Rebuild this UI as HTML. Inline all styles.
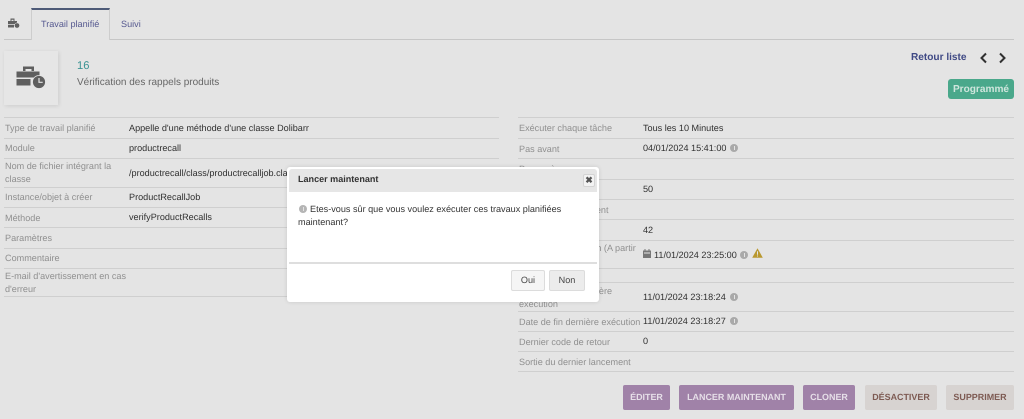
<!DOCTYPE html>
<html lang="fr"><head><meta charset="utf-8"><title>Travail planifié</title>
<style>
html,body{margin:0;padding:0}
body{width:1024px;height:419px;position:relative;overflow:hidden;background:#e4e4e4;font-family:"Liberation Sans",sans-serif;font-size:9.1px;color:#333;text-rendering:geometricPrecision}
#w{position:absolute;left:0;top:0;width:1024px;height:419px;filter:blur(.3px)}
.a{position:absolute;white-space:nowrap}
.l{position:absolute;height:1px;background:#cfcfcf}
.k{color:#8f8f8f;line-height:13px}
.v{color:#2f2f2f}
.b{position:absolute;top:385px;height:25px;line-height:24px;text-align:center;border-radius:2px;font-weight:bold;font-size:8.95px;box-sizing:border-box}
.p{background:#a082a8;color:#e6dfe8}
.g{background:#d7d3d1;color:#7d5a52}
.i{position:absolute;width:8px;height:8px;border-radius:50%;background:#a9a9a9}
.i:after{content:"";position:absolute;left:3.5px;top:2px;width:1px;height:4px;background:#e4e4e4}
</style></head><body><div id="w">
<svg class="a" style="left:7px;top:17px" width="13" height="12" viewBox="0 0 13 12"><path d="M1 4h9v3H1zM1 7.800h6V10.500H1zM3.500 4V1.500h4V4h-1V2.700h-2V4z" fill="#606060"/><circle cx="10" cy="8.500" r="2.600" fill="#606060" stroke="#e4e4e4" stroke-width=".5"/></svg>
<div class="l" style="left:4px;top:39px;width:1010px;background:#c6c6c6"></div>
<div class="a" style="left:31px;top:8px;width:79px;height:32px;border:1px solid #cdcdcd;border-top:2px solid #4d5a77;border-bottom:0;box-sizing:border-box;background:#e4e4e4"></div>
<div class="a" style="left:41px;top:19px;color:#55588f">Travail planifié</div>
<div class="a" style="left:121px;top:19px;color:#55588f">Suivi</div>

<div class="a" style="left:4px;top:51px;width:54px;height:54px;background:#e6e6e6;box-shadow:1px 1px 4px rgba(0,0,0,.1)"></div>
<svg class="a" style="left:16px;top:65px" width="30" height="25" viewBox="0 0 30 25"><path d="M0.500 6.500h23v6h-23zM0.500 14h14v6.500h-14zM7 6V1.500h11V6h-2.500V4H9.500V6z" fill="#5f5f5f"/><circle cx="23" cy="17" r="6.500" fill="#5f5f5f" stroke="#e6e6e6" stroke-width="0.800"/><path d="M23 13v4.300h3.700" fill="none" stroke="#e6e6e6" stroke-width="1.200"/></svg>
<div class="a" style="left:77px;top:60px;font-size:11.200px;color:#3c9494">16</div>
<div class="a" style="left:77px;top:77px;font-size:10px;color:#666">Vérification des rappels produits</div>

<div class="a" style="left:911px;top:52px;font-size:10.100px;font-weight:bold;color:#404a85">Retour liste</div>
<svg class="a" style="left:978px;top:52px" width="32" height="12" viewBox="0 0 32 12"><path d="M8 1.500 3.500 6 8 10.500M22 1.500 26.500 6 22 10.500" fill="none" stroke="#303030" stroke-width="2"/></svg>
<div class="a" style="left:948px;top:79px;width:66px;height:20px;background:#4aa88b;border-radius:3px;color:#cfe6dd;font-weight:bold;font-size:10.100px;line-height:21px;text-align:center">Programmé</div>

<!-- left table -->
<div class="l" style="left:4px;width:495px;top:117px"></div><div class="l" style="left:4px;width:495px;top:138px"></div><div class="l" style="left:4px;width:495px;top:158px"></div><div class="l" style="left:4px;width:495px;top:187px"></div><div class="l" style="left:4px;width:495px;top:207px"></div><div class="l" style="left:4px;width:495px;top:227px"></div><div class="l" style="left:4px;width:495px;top:248px"></div><div class="l" style="left:4px;width:495px;top:268px"></div><div class="l" style="left:4px;width:495px;top:296px"></div>
<div class="a k" style="left:5px;top:122px">Type de travail planifié</div>
<div class="a v" style="left:129px;top:123px">Appelle d'une méthode d'une classe Dolibarr</div>
<div class="a k" style="left:5px;top:142px">Module</div>
<div class="a v" style="left:129px;top:143px">productrecall</div>
<div class="a k" style="left:5px;top:160px">Nom de fichier intégrant la<br>classe</div>
<div class="a v" style="left:129px;top:168px">/productrecall/class/productrecalljob.class.php</div>
<div class="a k" style="left:5px;top:191px">Instance/objet à créer</div>
<div class="a v" style="left:129px;top:192px">ProductRecallJob</div>
<div class="a k" style="left:5px;top:212px">Méthode</div>
<div class="a v" style="left:129px;top:212px">verifyProductRecalls</div>
<div class="a k" style="left:5px;top:232px">Paramètres</div>
<div class="a k" style="left:5px;top:252px">Commentaire</div>
<div class="a k" style="left:5px;top:270px">E-mail d'avertissement en cas<br>d'erreur</div>

<!-- right table -->
<div class="l" style="left:518px;width:496px;top:117px"></div><div class="l" style="left:518px;width:496px;top:138px"></div><div class="l" style="left:518px;width:496px;top:158px"></div><div class="l" style="left:518px;width:496px;top:179px"></div><div class="l" style="left:518px;width:496px;top:199px"></div><div class="l" style="left:518px;width:496px;top:219px"></div><div class="l" style="left:518px;width:496px;top:240px"></div><div class="l" style="left:518px;width:496px;top:268px"></div><div class="l" style="left:518px;width:496px;top:282px"></div><div class="l" style="left:518px;width:496px;top:311px"></div><div class="l" style="left:518px;width:496px;top:331px"></div><div class="l" style="left:518px;width:496px;top:351px"></div><div class="l" style="left:518px;width:496px;top:371px"></div>
<div class="a k" style="left:519px;top:122px">Exécuter chaque tâche</div>
<div class="a v" style="left:643px;top:123px">Tous les 10 Minutes</div>
<div class="a k" style="left:519px;top:143px">Pas avant</div>
<div class="a v" style="left:643px;top:143px">04/01/2024 15:41:00</div><div class="i" style="left:730px;top:144px"></div>
<div class="a k" style="left:519px;top:163px">Pas après</div>
<div class="a k" style="left:519px;top:183px">Priorité</div>
<div class="a v" style="left:643px;top:184px">50</div>
<div class="a k" style="left:519px;top:204px">Nombre de lancement</div>
<div class="a k" style="left:519px;top:224px">Nombre</div>
<div class="a v" style="left:643px;top:225px">42</div>
<div class="a k" style="left:519px;top:242px">Prochaine exécution (A partir<br>de)</div>
<svg class="a" style="left:643px;top:249px" width="8" height="9" viewBox="0 0 8 9"><path d="M0 1.500h8V9H0zM1.500 0h1v2h-1zM5.500 0h1v2h-1z" fill="#777"/><path d="M1 3.500h6v1H1z" fill="#e4e4e4"/></svg>
<div class="a v" style="left:654px;top:250px">11/01/2024 23:25:00</div><div class="i" style="left:740px;top:251px"></div>
<svg class="a" style="left:752px;top:248px" width="11" height="10" viewBox="0 0 11 10"><path d="M5.500 0.300 10.800 9.700H0.200z" fill="#b9982f"/><path d="M5 3.300h1v3.400H5zM5 7.500h1v1H5z" fill="#e4e4e4"/></svg>
<div class="a k" style="left:519px;top:285px">Date de début dernière<br>exécution</div>
<div class="a v" style="left:643px;top:292px">11/01/2024 23:18:24</div><div class="i" style="left:730px;top:293px"></div>
<div class="a k" style="left:519px;top:316px">Date de fin dernière exécution</div>
<div class="a v" style="left:643px;top:316px">11/01/2024 23:18:27</div><div class="i" style="left:730px;top:317px"></div>
<div class="a k" style="left:519px;top:336px">Dernier code de retour</div>
<div class="a v" style="left:643px;top:336px">0</div>
<div class="a k" style="left:519px;top:356px">Sortie du dernier lancement</div>

<!-- action buttons -->
<div class="b p" style="left:623px;width:47px">ÉDITER</div>
<div class="b p" style="left:679px;width:115px">LANCER MAINTENANT</div>
<div class="b p" style="left:803px;width:52px">CLONER</div>
<div class="b g" style="left:865px;width:72px">DÉSACTIVER</div>
<div class="b g" style="left:946px;width:68px">SUPPRIMER</div>

<!-- dialog -->
<div class="a" style="left:287px;top:167px;width:312px;height:135px;background:#fff;border-radius:3px;box-shadow:0 0 4px rgba(0,0,0,.12)">
  <div class="a" style="left:2px;top:2px;width:308px;height:23px;background:#e6e6e6;border-radius:3px 3px 0 0"></div>
  <div class="a" style="left:11px;top:6px;font-size:9.050px;font-weight:bold;color:#333;line-height:13px">Lancer maintenant</div>
  <div class="a" style="left:296px;top:7px;width:12px;height:13px;background:#f3f3f3;border:1px solid #d4d4d4;box-sizing:border-box;border-radius:2px;color:#555;font-size:9px;font-weight:bold;line-height:11px;text-align:center">✖</div>
  <div class="i" style="left:12px;top:38px;background:#b5b5b5"></div>
  <div class="a" style="left:11px;top:36px;font-size:9.100px;line-height:13px;color:#333"><span style="margin-left:12px"></span>Etes-vous sûr que vous voulez exécuter ces travaux planifiées<br>maintenant?</div>
  <div class="a" style="left:2px;top:95px;width:308px;height:2px;background:#dedede"></div>
  <div class="a" style="left:224px;top:103px;width:34px;height:21px;background:#f5f5f5;border:1px solid #dcdcdc;box-sizing:border-box;border-radius:2px;text-align:center;line-height:19px;font-size:9.100px;color:#444">Oui</div>
  <div class="a" style="left:262px;top:103px;width:36px;height:21px;background:#ececec;border:1px solid #dcdcdc;box-sizing:border-box;border-radius:2px;text-align:center;line-height:19px;font-size:9.100px;color:#444">Non</div>
</div>
</div></body></html>
